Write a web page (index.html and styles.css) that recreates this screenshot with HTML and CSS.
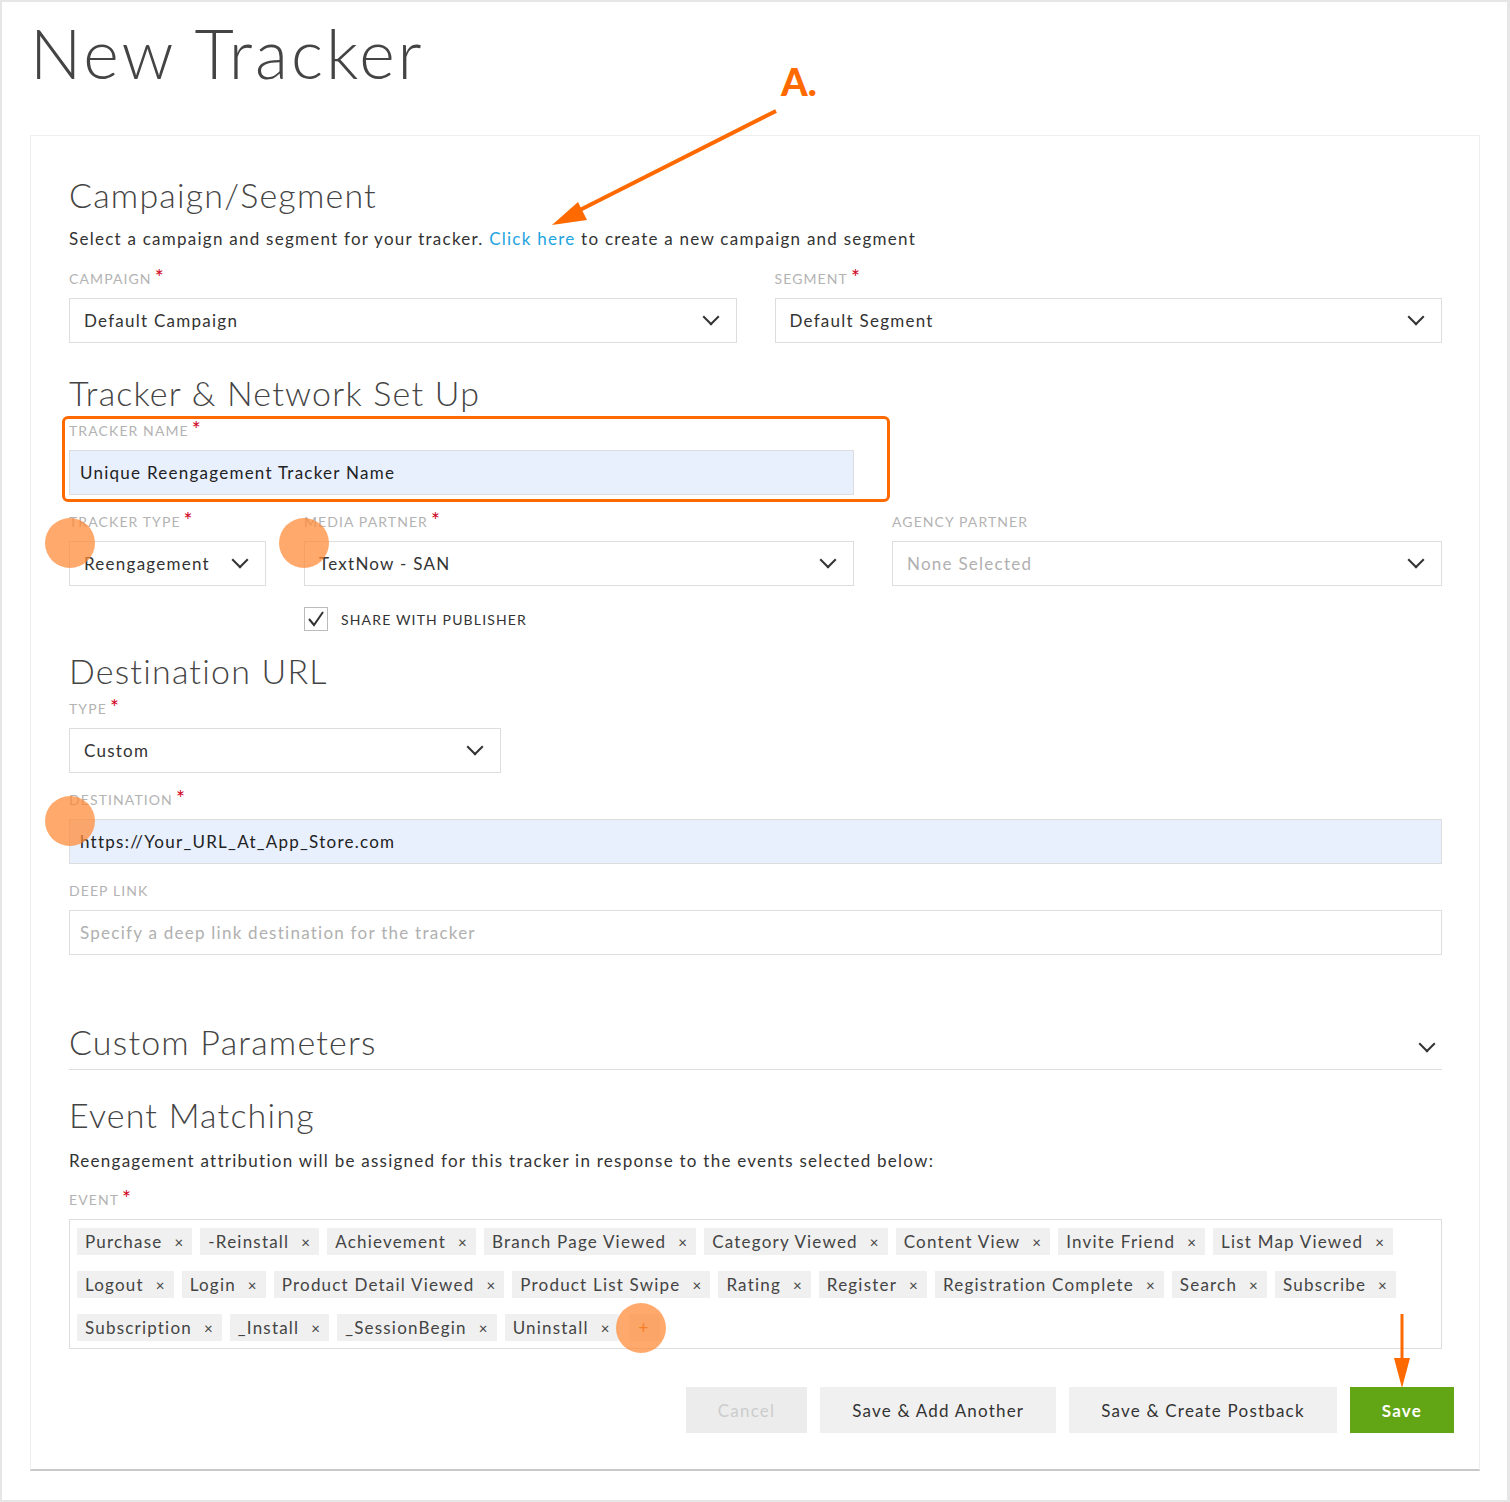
FILE: index.html
```html
<!DOCTYPE html>
<html lang="en">
<head>
    <meta charset="UTF-8">
    <meta name="viewport" content="width=device-width, initial-scale=1.0">
    <title>New Tracker</title>
    <link rel="stylesheet" href="styles.css">
</head>
<body>
    <div class="page">
        <h1 class="pageTitle">New Tracker</h1>
        <div class="card">
            <h2 class="sectionTitle first">Campaign/Segment</h2>
            <p class="sectionText">Select a campaign and segment for your tracker. <a href="#" class="link">Click here</a> to create a new campaign and segment</p>
            <div class="row two">
                <div class="field">
                    <label class="fieldLabel">CAMPAIGN<span class="req">*</span></label>
                    <div class="select">Default Campaign<span class="chev"></span></div>
                </div>
                <div class="field">
                    <label class="fieldLabel">SEGMENT<span class="req">*</span></label>
                    <div class="select">Default Segment<span class="chev"></span></div>
                </div>
            </div>

            <h2 class="sectionTitle network">Tracker &amp; Network Set Up</h2>
            <div class="field nameField">
                <div class="highlight"></div>
                <label class="fieldLabel">TRACKER NAME<span class="req">*</span></label>
                <div class="input filled">Unique Reengagement Tracker Name</div>
            </div>
            <div class="row three">
                <div class="field">
                    <label class="fieldLabel">TRACKER TYPE<span class="req">*</span></label>
                    <div class="select">Reengagement<span class="chev"></span></div>
                </div>
                <div class="field">
                    <label class="fieldLabel">MEDIA PARTNER<span class="req">*</span></label>
                    <div class="select">TextNow - SAN<span class="chev"></span></div>
                    <div class="check">
                        <span class="box">
                            <svg width="18" height="18" viewBox="0 0 18 18"><polyline points="2,9 7,15 16,2" fill="none" stroke="#333" stroke-width="2"/></svg>
                        </span>
                        SHARE WITH PUBLISHER
                    </div>
                </div>
                <div class="field">
                    <label class="fieldLabel">AGENCY PARTNER</label>
                    <div class="select muted">None Selected<span class="chev"></span></div>
                </div>
            </div>

            <h2 class="sectionTitle dest">Destination URL</h2>
            <div class="field typeField">
                <label class="fieldLabel">TYPE<span class="req">*</span></label>
                <div class="select">Custom<span class="chev"></span></div>
            </div>
            <div class="field gapField">
                <label class="fieldLabel">DESTINATION<span class="req">*</span></label>
                <div class="input filled">https://Your_URL_At_App_Store.com</div>
            </div>
            <div class="field gapField">
                <label class="fieldLabel">DEEP LINK</label>
                <div class="input placeholder">Specify a deep link destination for the tracker</div>
            </div>

            <div class="collapse">
                <h2 class="sectionTitle">Custom Parameters</h2>
                <span class="chev big"></span>
            </div>

            <h2 class="sectionTitle events">Event Matching</h2>
            <p class="sectionText">Reengagement attribution will be assigned for this tracker in response to the events selected below:</p>
            <div class="field gapField">
                <label class="fieldLabel">EVENT<span class="req">*</span></label>
                <div class="tags" id="tags"></div>
            </div>

            <div class="actions">
                <button class="btn disabled">Cancel</button>
                <button class="btn">Save &amp; Add Another</button>
                <button class="btn">Save &amp; Create Postback</button>
                <button class="btn primary">Save</button>
            </div>
        </div>
    </div>

    <svg class="notes" width="1510" height="1502" viewBox="0 0 1510 1502">
        <text x="781" y="96" class="noteText">A.</text>
        <line x1="776" y1="111" x2="572" y2="214" stroke="#ff6a00" stroke-width="4"/>
        <polygon points="552,225 578,202 587,220" fill="#ff6a00"/>
        <line x1="1402" y1="1314" x2="1402" y2="1366" stroke="#ff6a00" stroke-width="3"/>
        <polygon points="1394,1358 1410,1358 1402,1388" fill="#ff6a00"/>
        <circle cx="70" cy="543" r="25" class="dot"/>
        <circle cx="304" cy="543" r="25" class="dot"/>
        <circle cx="70" cy="821" r="25" class="dot"/>
        <circle cx="641" cy="1328" r="25" class="dot"/>
    </svg>

    <script>
        let events = ["Purchase","-Reinstall","Achievement","Branch Page Viewed","Category Viewed","Content View","Invite Friend","List Map Viewed",
            "Logout","Login","Product Detail Viewed","Product List Swipe","Rating","Register","Registration Complete","Search","Subscribe",
            "Subscription","_Install","_SessionBegin","Uninstall"]
        let tags = document.getElementById("tags")
        let rows = [8, 9, 4]
        let k = 0
        for(let r=0;r<rows.length;r++){
            let row = document.createElement("div")
            row.className = "tagRow"
            for(let i=0;i<rows[r];i++){
                let t = document.createElement("span")
                t.className = "tag"
                t.innerHTML = events[k] + '<span class="x">×</span>'
                row.appendChild(t)
                k++
            }
            if(r===rows.length-1){
                let add = document.createElement("span")
                add.className = "tag add"
                add.innerHTML = "+"
                row.appendChild(add)
            }
            tags.appendChild(row)
        }
    </script>
</body>
</html>
```

FILE: styles.css
```css
*{
    box-sizing: border-box;
}
body{
    margin: 0;
    position: relative;
    font-family: Lato, "Open Sans", sans-serif;
    color: #333;
    background: #fff;
}
.page{
    width: 1510px;
    height: 1502px;
    border: 2px solid #e6e6e6;
    border-right-width: 3px;
    padding-left: 28px;
}
.pageTitle{
    margin: 0;
    padding-left: 0;
    font-weight: 300;
    font-size: 68px;
    line-height: 80px;
    height: 133px;
    padding-top: 11px;
    letter-spacing: 3px;
    color: #444;
}
.card{
    width: 1450px;
    border: 1px solid #eee;
    border-bottom: 2px solid #c9c9c9;
    padding: 39px 37px 36px 38px;
}
.sectionTitle{
    margin: 0;
    font-weight: 300;
    font-size: 34px;
    line-height: 40px;
    letter-spacing: 1.2px;
    color: #444;
}
.sectionText{
    margin: 12px 0 0;
    font-size: 17px;
    line-height: 24px;
    letter-spacing: 1.25px;
}
.link{
    color: #1ea4e0;
    text-decoration: none;
}
.row{
    display: grid;
    column-gap: 38px;
}
.row.two{
    grid-template-columns: 1fr 1fr;
    margin-top: 18px;
}
.row.three{
    grid-template-columns: 197px 550px 1fr;
    margin-top: 17px;
}
.field{
    position: relative;
}
.fieldLabel{
    display: block;
    font-size: 14px;
    line-height: 20px;
    height: 20px;
    margin-bottom: 9px;
    color: #b3b3b3;
    letter-spacing: 1.1px;
}
.req{
    color: #d0021b;
    font-size: 21px;
    margin-left: 3px;
    vertical-align: top;
    line-height: 16px;
}
.select, .input{
    height: 45px;
    border: 1px solid #ddd;
    font-size: 17px;
    letter-spacing: 1.25px;
    display: flex;
    align-items: center;
    justify-content: space-between;
    background: #fff;
}
.select{
    padding: 0 16px 0 14px;
}
.input{
    padding: 0 10px;
}
.filled{
    background: #e8f0fe;
    color: #222;
}
.placeholder, .muted{
    color: #b0b0b0;
}
.chev{
    width: 12px;
    height: 12px;
    border-right: 2px solid #333;
    border-bottom: 2px solid #333;
    transform: rotate(45deg);
    margin-top: -7px;
    margin-right: 3px;
}
.sectionTitle.network{
    margin-top: 30px;
}
.nameField{
    width: 785px;
    margin-top: 8px;
}
.highlight{
    position: absolute;
    left: -7px;
    top: -5px;
    width: 828px;
    height: 86px;
    border: 3px solid #ff6a00;
    border-radius: 6px;
}
.check{
    display: flex;
    align-items: center;
    gap: 13px;
    margin-top: 21px;
    font-size: 14px;
    letter-spacing: 1.15px;
    color: #333;
}
.box{
    width: 24px;
    height: 24px;
    border: 1px solid #bbb;
    display: flex;
    align-items: center;
    justify-content: center;
}
.sectionTitle.dest{
    margin-top: 20px;
}
.typeField{
    width: 432px;
    margin-top: 8px;
}
.gapField{
    margin-top: 17px;
}
.collapse{
    margin-top: 67px;
    display: flex;
    align-items: center;
    justify-content: space-between;
    padding-bottom: 7px;
    border-bottom: 1px solid #ddd;
}
.chev.big{
    margin-right: 9px;
    margin-top: 4px;
}
.sectionTitle.events{
    margin-top: 25px;
}
.events + .sectionText{
    margin-top: 14px;
}
.tags{
    border: 1px solid #ddd;
    padding: 8px 7px 7px;
    display: flex;
    flex-direction: column;
    gap: 16px;
}
.tagRow{
    display: flex;
    gap: 8px;
}
.tag{
    height: 27px;
    background: #f0f0f0;
    padding: 0 8px;
    display: flex;
    align-items: center;
    font-size: 17px;
    letter-spacing: 1.2px;
    color: #444;
}
.x{
    margin-left: 12px;
    font-size: 15px;
    color: #444;
}
.tag.add{
    color: #e0600a;
    padding: 0 10px;
    margin-left: 2px;
}
.actions{
    display: flex;
    justify-content: flex-end;
    gap: 13px;
    margin-top: 38px;
    margin-right: -12px;
}
.btn{
    height: 46px;
    border: none;
    background: #f0f0f0;
    font-family: Lato, "Open Sans", sans-serif;
    font-size: 17px;
    letter-spacing: 1.2px;
    color: #333;
    padding: 0 32px;
}
.btn.disabled{
    background: #ececec;
    color: #ccc;
}
.btn.primary{
    background: #62a515;
    color: #fff;
    font-weight: 700;
}
.notes{
    position: absolute;
    top: 0;
    left: 0;
    pointer-events: none;
}
.noteText{
    font-family: Lato, sans-serif;
    font-weight: 900;
    font-size: 38px;
    fill: #ff6a00;
}
.dot{
    fill: rgba(255, 136, 51, 0.72);
}
```
